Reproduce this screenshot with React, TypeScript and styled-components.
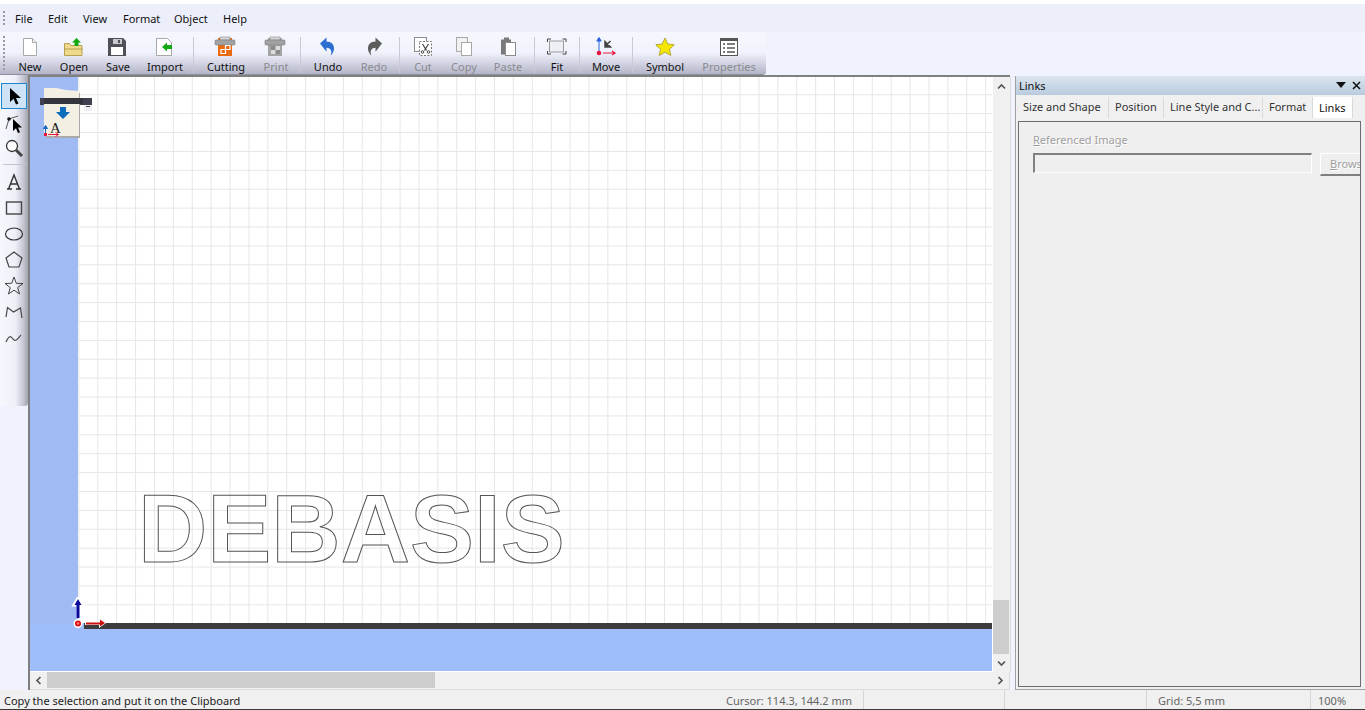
import React from 'react'
import styled, { createGlobalStyle } from 'styled-components'

const UI_FONT = '"Noto Sans", "Open Sans", sans-serif'

const GlobalStyle = createGlobalStyle`
  html, body { margin: 0; padding: 0; background: #f0f3fd; }
  body { font-family: ${UI_FONT}; font-size: 11px; color: #1a1a1a; }
`

const Window = styled.div`
  width: 1365px;
  height: 710px;
  display: flex;
  flex-direction: column;
  overflow: hidden;
  background: #f0f3fd;
  border-top: 4px solid #ffffff;
  box-sizing: border-box;
`

const MenuBar = styled.div`
  height: 28px;
  flex: none;
  display: flex;
  align-items: center;
  background: #eceffa;
  padding-left: 3px;
`

const Grip = styled.div`
  width: 2px;
  height: 15px;
  margin-right: 10px;
  background: repeating-linear-gradient(to bottom, #9a9aa6 0 2px, transparent 2px 4px);
`

const MenuItem = styled.span<{ $w: number }>`
  width: ${p => p.$w}px;
  font-size: 11px;
  color: #111;
`

const ToolBar = styled.div`
  width: 766px;
  height: 43px;
  flex: none;
  display: flex;
  box-sizing: border-box;
  padding-left: 3px;
  border-bottom: 1px solid #8e8f9f;
  border-bottom-right-radius: 4px;
  background: linear-gradient(to bottom, #f6f7fe 0%, #f1f3fc 48%, #d5d7e6 72%, #b4b6c8 100%);
`

const ToolGrip = styled(Grip)`
  height: 34px;
  margin: 4px 3px 0 0;
`

const ToolButton = styled.div<{ $w: number; $off?: boolean }>`
  width: ${p => p.$w}px;
  flex: none;
  display: flex;
  flex-direction: column;
  align-items: center;
  padding-top: 4px;
  font-size: 11px;
  line-height: 14px;
  color: ${p => (p.$off ? '#8a8a8e' : '#111')};
  svg { display: block; margin-bottom: 2px; }
`

const ToolSep = styled.div`
  width: 1px;
  height: 36px;
  margin: 5px 3px 0;
  flex: none;
  background: #c9cad4;
`

const Main = styled.div`
  flex: 1;
  display: flex;
  min-height: 0;
`

const ToolColumn = styled.div`
  width: 28px;
  flex: none;
`

const ToolStrip = styled.div`
  height: 331px;
  box-sizing: border-box;
  padding: 8px 0 0 1px;
  border-bottom-right-radius: 3px;
  background: linear-gradient(to right, #f7f8fe 0%, #eef0f8 55%, #c6c8d4 82%, #a3a5b2 100%);
  display: flex;
  flex-direction: column;
`

const ToolSlot = styled.div<{ $on?: boolean; $h?: number }>`
  width: 26px;
  height: ${p => p.$h ?? 26}px;
  box-sizing: border-box;
  flex: none;
  display: flex;
  align-items: center;
  justify-content: center;
  border: 1px solid ${p => (p.$on ? '#1c86cf' : 'transparent')};
  background: ${p => (p.$on ? '#cfe3f6' : 'transparent')};
`

const StripRule = styled.div`
  height: 1px;
  width: 24px;
  margin: 3px 0 3px 2px;
  background: #c2c3cc;
  flex: none;
`

const Workspace = styled.div`
  width: 982px;
  flex: none;
  box-sizing: border-box;
  display: flex;
  flex-direction: column;
  border-top: 2px solid #808080;
  border-left: 2px solid #808080;
  background: #f0f0f0;
`

const ViewRow = styled.div`
  flex: 1;
  display: flex;
  min-height: 0;
`

const Viewport = styled.div`
  position: relative;
  width: 962px;
  flex: none;
  display: flex;
  flex-direction: column;
  overflow: hidden;
  background: #a0bdfb;
  border-bottom: 1px solid #ffffff;
  border-right: 1px solid #ffffff;
`

const LeftBand = styled.div`
  position: absolute;
  left: 0;
  top: 0;
  width: 48px;
  height: 547px;
  background: #a0bbf3;
`

const Sheet = styled.div`
  position: relative;
  height: 546px;
  flex: none;
  margin-left: 48px;
  background-color: #ffffff;
  background-image:
    linear-gradient(to right, #e6e6e6 1px, transparent 1px),
    linear-gradient(to bottom, #e6e6e6 1px, transparent 1px);
  background-size: 18.9px 18.9px;
  background-position: 19.3px 17.3px;
`

const Outline = styled.div`
  position: absolute;
  left: 60px;
  top: 397px;
  font-family: "Liberation Sans", Arial, sans-serif;
  font-weight: 700;
  font-size: 96px;
  line-height: 110px;
  white-space: nowrap;
  color: transparent;
  -webkit-text-stroke: 1px #555555;
`

const BedBar = styled.div`
  height: 6px;
  flex: none;
  margin-left: 54px;
  margin-top: 0;
  background: #3c3c3c;
`

const Overlay = styled.svg<{ $x: number; $y: number }>`
  position: absolute;
  left: ${p => p.$x}px;
  top: ${p => p.$y}px;
`

const VScroll = styled.div`
  width: 18px;
  box-sizing: border-box;
  flex: none;
  display: flex;
  flex-direction: column;
  border-right: 1px solid #dcdcdc;
  padding-bottom: 0;
`

const ScrollEnd = styled.div`
  height: 18px;
  flex: none;
  display: flex;
  align-items: center;
  justify-content: center;
`

const VTrack = styled.div`
  flex: 1;
  display: flex;
  flex-direction: column;
  justify-content: flex-end;
  padding: 0 1px 0 0;
`

const VThumb = styled.div`
  height: 54px;
  background: #cdcdcd;
`

const HScroll = styled.div`
  height: 18px;
  flex: none;
  display: flex;
  box-sizing: border-box;
  border-right: 1px solid #dcdcdc;
  border-bottom: 1px solid #dcdcdc;
`

const HEnd = styled.div`
  width: 17px;
  flex: none;
  display: flex;
  align-items: center;
  justify-content: center;
`

const HTrack = styled.div`
  flex: 1;
`

const HThumb = styled.div`
  width: 388px;
  height: 16px;
  background: #cdcdcd;
`

const Panel = styled.div`
  flex: 1;
  margin: 1px 0 0 5px;
  display: flex;
  flex-direction: column;
  border-left: 1px solid #a0a0a0;
  border-bottom: 1px solid #a0a0a0;
  background: #f0f0f0;
  min-width: 0;
`

const PanelHead = styled.div`
  height: 19px;
  flex: none;
  display: flex;
  align-items: center;
  padding: 0 4px 0 3px;
  background: linear-gradient(to bottom, #dbe5ee, #b8cbde);
  font-size: 11px;
  color: #111;
`

const PanelTitle = styled.span`
  flex: 1;
`

const HeadIcon = styled.svg`
  margin-left: 6px;
  display: block;
`

const Tabs = styled.div`
  height: 21px;
  flex: none;
  margin-top: 2px;
  display: flex;
  padding-left: 1px;
`

const Tab = styled.div<{ $w: number; $on?: boolean }>`
  width: ${p => p.$w}px;
  box-sizing: border-box;
  flex: none;
  padding: ${p => (p.$on ? '3px 0 0 6px' : '2px 0 0 6px')};
  font-size: 11px;
  line-height: 15px;
  white-space: nowrap;
  color: ${p => (p.$on ? '#111' : '#333')};
  background: ${p => (p.$on ? '#ffffff' : 'transparent')};
  border-right: 1px solid #d9d9d9;
`

const TabBody = styled.div`
  flex: 1;
  margin: 3px 4px 2px 2px;
  box-sizing: border-box;
  border: 1px solid #6d6d6d;
  background: #efefef;
  padding: 11px 0 0 14px;
  overflow: hidden;
`

const FieldLabel = styled.div`
  font-size: 11px;
  line-height: 14px;
  color: #a0a0a0;
  text-shadow: 1px 1px 0 #ffffff;
  u { text-decoration: underline; }
`

const FieldRow = styled.div`
  margin-top: 6px;
  display: flex;
  gap: 8px;
`

const FieldInput = styled.div`
  width: 279px;
  height: 20px;
  flex: none;
  box-sizing: border-box;
  border-top: 2px solid #808080;
  border-left: 2px solid #808080;
  border-right: 1px solid #ffffff;
  border-bottom: 1px solid #ffffff;
`

const BrowseButton = styled.div`
  width: 60px;
  height: 23px;
  flex: none;
  box-sizing: border-box;
  padding: 2px 0 0 9px;
  font-size: 11px;
  line-height: 15px;
  color: #a0a0a0;
  text-shadow: 1px 1px 0 #ffffff;
  border-top: 1px solid #ffffff;
  border-left: 1px solid #ffffff;
  border-bottom: 2px solid #808080;
`

const StatusBar = styled.div`
  height: 20px;
  flex: none;
  box-sizing: border-box;
  display: flex;
  align-items: center;
  background: #f0f0f0;
  border-bottom: 1px solid #3a3a3a;
  font-size: 11px;
  color: #222;
`

const StatusCell = styled.div<{ $w: number; $line?: boolean; $dim?: boolean; $pad?: number }>`
  width: ${p => p.$w}px;
  flex: none;
  box-sizing: border-box;
  height: 19px;
  line-height: 21px;
  padding-left: ${p => p.$pad ?? 0}px;
  white-space: nowrap;
  color: ${p => (p.$dim ? '#666' : '#222')};
  border-left: ${p => (p.$line ? '1px solid #d6d6d6' : 'none')};
`

const toolButtons: { label: string; w: number; off?: boolean; sep?: boolean; icon: React.ReactNode }[] = [
  { label: 'New', w: 44, icon: <NewIcon /> },
  { label: 'Open', w: 44, icon: <OpenIcon /> },
  { label: 'Save', w: 44, icon: <SaveIcon /> },
  { label: 'Import', w: 50, sep: true, icon: <ImportIcon /> },
  { label: 'Cutting', w: 58, icon: <PrinterIcon body="#ea6a10" /> },
  { label: 'Print', w: 42, off: true, sep: true, icon: <PrinterIcon body="#a4a4a4" /> },
  { label: 'Undo', w: 48, icon: <TurnIcon color="#2d6fd0" /> },
  { label: 'Redo', w: 44, off: true, sep: true, icon: <TurnIcon color="#5c5c5c" flip /> },
  { label: 'Cut', w: 40, off: true, icon: <CutIcon /> },
  { label: 'Copy', w: 42, off: true, icon: <CopyIcon /> },
  { label: 'Paste', w: 46, off: true, sep: true, icon: <PasteIcon /> },
  { label: 'Fit', w: 38, sep: true, icon: <FitIcon /> },
  { label: 'Move', w: 46, sep: true, icon: <MoveIcon /> },
  { label: 'Symbol', w: 58, icon: <StarIcon /> },
  { label: 'Properties', w: 70, off: true, icon: <PropertiesIcon /> },
]

function Ico({ children }: { children: React.ReactNode }) {
  return <svg width="24" height="22" viewBox="0 0 24 22">{children}</svg>
}

function NewIcon() {
  return (
    <Ico>
      <path d="M5.5 2.5h9l4 4v13h-13z" fill="#fff" stroke="#a8a8a8" />
      <path d="M14.5 2.5v4h4" fill="#eee" stroke="#a8a8a8" />
    </Ico>
  )
}

function OpenIcon() {
  return (
    <Ico>
      <path d="M2.5 19.5v-12h5l1.5 2h11v10z" fill="#eed98c" stroke="#b7a253" />
      <path d="M2.5 13h18" stroke="#b7a253" />
      <path d="M14.5 2l4.5 4.5h-2.500v3.500h-4v-3.500h-2.500z" fill="#12a812" />
    </Ico>
  )
}

function SaveIcon() {
  return (
    <Ico>
      <path d="M2 2h15l3 3v15h-18z" fill="#4f5058" />
      <rect x="7" y="3" width="9" height="5" fill="#c9c9cc" />
      <rect x="12" y="4" width="2" height="3" fill="#4f5058" />
      <rect x="5" y="11" width="12" height="8" fill="#fff" />
    </Ico>
  )
}

function ImportIcon() {
  return (
    <Ico>
      <path d="M3.500 2.500h11l4 4v13h-15z" fill="#fff" stroke="#a8a8a8" />
      <path d="M9 11l5-4.500v2.500h5v4h-5v2.500z" fill="#12a812" />
    </Ico>
  )
}

function PrinterIcon({ body }: { body: string }) {
  const gray = body !== '#ea6a10'
  return (
    <Ico>
      <rect x="4" y="2" width="14" height="18" fill={body} />
      <rect x="6" y="1" width="10" height="3" fill="#d8d8d8" stroke="#8a8a8a" strokeWidth="0.6" />
      <rect x="1" y="4" width="20" height="5" rx="1" fill="#a2a2a4" stroke="#7c7c7e" strokeWidth="0.6" />
      {gray ? (
        <>
          <rect x="7" y="10" width="9" height="8" fill="#dcdcdc" />
          <rect x="7" y="10" width="4.500" height="4" fill="#8a8a8a" />
          <rect x="11.500" y="14" width="4.500" height="4" fill="#8a8a8a" />
        </>
      ) : (
        <path d="M11.500 9.500h4.500v4h-4.500zM7 13.500h4.500v4h-4.500z" fill="none" stroke="#fff" strokeWidth="1.200" />
      )}
    </Ico>
  )
}

function TurnIcon({ color, flip }: { color: string; flip?: boolean }) {
  return (
    <Ico>
      <g transform={flip ? 'matrix(-1 0 0 1 24 0)' : undefined}>
        <path d="M4 7.500l6.500-6v4c5 .2 7.500 3 7.500 7 0 3-1.500 5.500-3.500 7 1-2 1.200-4 .3-5.500-.9-1.400-2.300-2.200-4.300-2.200v4z" fill={color} />
      </g>
    </Ico>
  )
}

function CutIcon() {
  return (
    <Ico>
      <rect x="3.500" y="1.500" width="12" height="14" fill="#fff" stroke="#8c8c8c" />
      <rect x="8.500" y="5.500" width="12" height="14" fill="#fff" stroke="#777" strokeDasharray="2 1.500" />
      <path d="M11.500 8l4 6.500M17.500 8l-4 6.500" stroke="#444" strokeWidth="1.200" fill="none" />
      <circle cx="11.500" cy="16" r="1.300" fill="none" stroke="#444" />
      <circle cx="17.500" cy="16" r="1.300" fill="none" stroke="#444" />
    </Ico>
  )
}

function CopyIcon() {
  return (
    <Ico>
      <rect x="4.500" y="1.500" width="11" height="14" fill="#f2f2f2" stroke="#a8a8a8" />
      <rect x="9.500" y="6.500" width="10" height="13" fill="#fff" stroke="#a8a8a8" />
    </Ico>
  )
}

function PasteIcon() {
  return (
    <Ico>
      <path d="M5 3.500h3v-2h5v2h2v15h-10z" fill="#7a7a7a" />
      <rect x="9.500" y="6.500" width="10" height="13" fill="#fff" stroke="#8c8c8c" />
    </Ico>
  )
}

function FitIcon() {
  return (
    <Ico>
      <path d="M2.500 6v-3h3.500M17.500 3h3.500v3M21 15v3h-3.500M6 18h-3.500v-3" fill="none" stroke="#444" />
      <rect x="4.500" y="5" width="14" height="11" fill="#eef0f6" stroke="#9a9a9a" />
    </Ico>
  )
}

function MoveIcon() {
  return (
    <Ico>
      <path d="M5 16v-14M2.800 5l2.200-3.500 2.200 3.500z" stroke="#2a62e0" fill="#2a62e0" />
      <circle cx="5" cy="17" r="2.300" fill="#e5173f" />
      <path d="M9 17h12M18 15l3 2-3 2" stroke="#e5173f" fill="none" strokeWidth="1.200" />
      <path d="M16.500 5l-5 5M11 5.500v5.500h5.500z" stroke="#444" fill="#444" strokeWidth="1.500" />
    </Ico>
  )
}

function StarIcon() {
  return (
    <Ico>
      <path d="M12 2l2.800 6 6.400.8-4.700 4.400 1.300 6.300L12 16.300 6.200 19.500l1.300-6.300L2.800 8.800 9.200 8z" fill="#f4e600" stroke="#b5a93a" />
    </Ico>
  )
}

function PropertiesIcon() {
  return (
    <Ico>
      <rect x="3.500" y="2.500" width="17" height="17" fill="#fff" stroke="#555" />
      <rect x="3" y="2" width="18" height="3" fill="#555" />
      <path d="M6 8h2M10 8h8M6 12h2M10 12h8M6 16h2M10 16h8" stroke="#555" strokeWidth="1.400" />
    </Ico>
  )
}

function Cur({ children, w = 22, h = 22 }: { children: React.ReactNode; w?: number; h?: number }) {
  return <svg width={w} height={h} viewBox="0 0 22 22">{children}</svg>
}

const Chevron = ({ dir }: { dir: 'up' | 'down' | 'left' | 'right' }) => {
  const rot = { up: 0, right: 90, down: 180, left: 270 }[dir]
  return (
    <svg width="9" height="9" viewBox="0 0 9 9">
      <path d="M1 6.500l3.500-3.500 3.500 3.500" fill="none" stroke="#555" strokeWidth="1.700" transform={`rotate(${rot} 4.500 4.500)`} />
    </svg>
  )
}

export default function App() {
  return (
    <Window>
      <GlobalStyle />
      <MenuBar>
        <Grip />
        <MenuItem $w={33}>File</MenuItem>
        <MenuItem $w={35}>Edit</MenuItem>
        <MenuItem $w={40}>View</MenuItem>
        <MenuItem $w={51}>Format</MenuItem>
        <MenuItem $w={49}>Object</MenuItem>
        <MenuItem $w={30}>Help</MenuItem>
      </MenuBar>

      <ToolBar>
        <ToolGrip />
        {toolButtons.map(b => (
          <React.Fragment key={b.label}>
            <ToolButton $w={b.w} $off={b.off}>
              {b.icon}
              {b.label}
            </ToolButton>
            {b.sep && <ToolSep />}
          </React.Fragment>
        ))}
      </ToolBar>

      <Main>
        <ToolColumn>
          <ToolStrip>
            <ToolSlot $on>
              <Cur><path d="M7 3v14l3.500-3.200 2.500 5.700 2.500-1-2.500-5.500h5z" fill="#000" /></Cur>
            </ToolSlot>
            <ToolSlot>
              <Cur>
                <path d="M3 18l3-10 9-3" fill="none" stroke="#555" />
                <circle cx="6" cy="8" r="1.800" fill="#111" />
                <path d="M10 8v12l3-2.800 2 4.800 2-.8-2-4.700h4z" fill="#000" />
              </Cur>
            </ToolSlot>
            <ToolSlot>
              <Cur>
                <circle cx="9" cy="9" r="5.500" fill="#fff" stroke="#333" strokeWidth="1.300" />
                <path d="M13 13l6 6" stroke="#444" strokeWidth="3" />
              </Cur>
            </ToolSlot>
            <StripRule />
            <ToolSlot $h={27}>
              <Cur>
                <path d="M4 18h5M13 18h5M5.500 18L11 4l5.500 14M7.500 13h7" fill="none" stroke="#333" strokeWidth="1.400" />
              </Cur>
            </ToolSlot>
            <ToolSlot>
              <Cur><rect x="3.500" y="5" width="15" height="12" fill="none" stroke="#444" strokeWidth="1.400" /></Cur>
            </ToolSlot>
            <ToolSlot>
              <Cur><ellipse cx="11" cy="11" rx="8.500" ry="6" fill="none" stroke="#333" strokeWidth="1.200" /></Cur>
            </ToolSlot>
            <ToolSlot>
              <Cur><path d="M11 3l8 6-3 9H6L3 9z" fill="none" stroke="#444" strokeWidth="1.200" /></Cur>
            </ToolSlot>
            <ToolSlot>
              <Cur><path d="M11 2l2.300 6.300 6.700.2-5.300 4.100 1.900 6.400-5.600-3.800-5.600 3.800 1.900-6.400L2 8.500l6.700-.2z" fill="none" stroke="#444" /></Cur>
            </ToolSlot>
            <ToolSlot>
              <Cur><path d="M3 16l1.500-9.500 6 4.500 7-4 1.500 10" fill="none" stroke="#444" strokeWidth="1.200" /></Cur>
            </ToolSlot>
            <ToolSlot>
              <Cur><path d="M3 15c3-7 5-6 7-3s4 1 8-4" fill="none" stroke="#444" strokeWidth="1.200" /></Cur>
            </ToolSlot>
          </ToolStrip>
        </ToolColumn>

        <Workspace>
          <ViewRow>
            <Viewport>
              <LeftBand />
              <Sheet>
                <Outline>DEBASIS</Outline>
              </Sheet>
              <BedBar />
              <Overlay $x={10} $y={10} width="54" height="52" viewBox="0 0 54 52">
                <rect x="0" y="11" width="52" height="7" fill="#3f4150" />
                <rect x="44" y="18" width="8" height="6" fill="#eef0f6" />
                <rect x="46" y="19" width="4" height="1" fill="#444" />
                <path d="M5 1l14 .8 20 3.200v45H5z" fill="#aaa" transform="translate(1 1)" />
                <path d="M4 1h12l10 2 13 1v45H4z" fill="#f3f0e3" />
                <rect x="4" y="11" width="39" height="6" fill="#34353c" />
                <path d="M20 20h6v5h4l-7 7-7-7h4z" fill="#0e6cbc" />
                <text x="10" y="46" fontFamily='"Liberation Serif", serif' fontSize="15" fill="#222">A</text>
                <path d="M5.500 46v-7M3.500 41.500l2-3 2 3z" stroke="#1464c4" fill="#1464c4" />
                <rect x="4" y="46" width="3" height="3" fill="#e5173f" />
                <path d="M8 47.500h10M15.500 45.500l3 2-3 2" stroke="#e5173f" fill="none" />
              </Overlay>
              <Overlay $x={41} $y={520} width="22" height="34" viewBox="0 0 22 34">
                <path d="M7 21V5M7 1L3 8h8z" stroke="#fff" strokeWidth="3" fill="#fff" />
                <path d="M7 21V6" stroke="#0a0a9c" strokeWidth="3" />
                <path d="M7 2L3.500 8h7z" fill="#0a0a9c" />
                <circle cx="7" cy="26.500" r="4.500" fill="#fff" />
                <circle cx="7" cy="26.500" r="3" fill="#d80e0e" />
                <circle cx="7" cy="26.500" r="1.300" fill="#ff7a7a" />
              </Overlay>
              <Overlay $x={55} $y={540} width="24" height="12" viewBox="0 0 24 12">
                <path d="M0 4.500h14V1l7 5-7 5V8H0z" fill="#fff" />
                <path d="M1 5.500h14V2.500l5 3.500-5 3.500V7.500H1z" fill="#c8100f" />
              </Overlay>
            </Viewport>
            <VScroll>
              <ScrollEnd><Chevron dir="up" /></ScrollEnd>
              <VTrack><VThumb /></VTrack>
              <ScrollEnd><Chevron dir="down" /></ScrollEnd>
            </VScroll>
          </ViewRow>
          <HScroll>
            <HEnd><Chevron dir="left" /></HEnd>
            <HTrack><HThumb /></HTrack>
            <HEnd><Chevron dir="right" /></HEnd>
          </HScroll>
        </Workspace>

        <Panel>
          <PanelHead>
            <PanelTitle>Links</PanelTitle>
            <HeadIcon width="10" height="7" viewBox="0 0 10 7"><path d="M0 0h10L5 6z" fill="#111" /></HeadIcon>
            <HeadIcon width="9" height="9" viewBox="0 0 9 9"><path d="M1 1l7 7M8 1L1 8" stroke="#111" strokeWidth="1.500" /></HeadIcon>
          </PanelHead>
          <Tabs>
            <Tab $w={92}>Size and Shape</Tab>
            <Tab $w={55}>Position</Tab>
            <Tab $w={99}>Line Style and C...</Tab>
            <Tab $w={50}>Format</Tab>
            <Tab $w={40} $on>Links</Tab>
          </Tabs>
          <TabBody>
            <FieldLabel><u>R</u>eferenced Image</FieldLabel>
            <FieldRow>
              <FieldInput />
              <BrowseButton><u>B</u>rowse...</BrowseButton>
            </FieldRow>
          </TabBody>
        </Panel>
      </Main>

      <StatusBar>
        <StatusCell $w={726} $pad={4}>Copy the selection and put it on the Clipboard</StatusCell>
        <StatusCell $w={137} $dim>Cursor: 114.3, 144.2 mm</StatusCell>
        <StatusCell $w={141} $line />
        <StatusCell $w={142} $line />
        <StatusCell $w={164} $line $dim $pad={11}>Grid: 5,5 mm</StatusCell>
        <StatusCell $w={55} $line $dim $pad={7}>100%</StatusCell>
      </StatusBar>
    </Window>
  )
}
